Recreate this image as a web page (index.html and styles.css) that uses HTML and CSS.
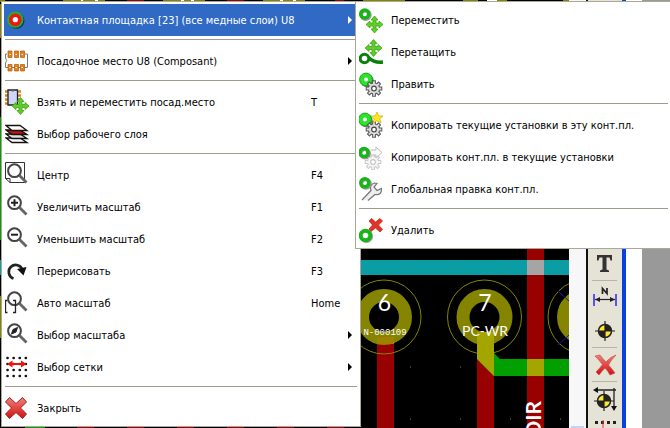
FILE: index.html
```html
<!DOCTYPE html>
<html lang="ru">
<head>
<meta charset="utf-8">
<title>Pcbnew</title>
<link rel="stylesheet" href="styles.css">
</head>
<body>
<svg class="defs" aria-hidden="true">
  <defs>
    <linearGradient id="red" x1="0" y1="0" x2="0" y2="1"><stop offset="0" stop-color="#f08078"/><stop offset="1" stop-color="#d01010"/></linearGradient>
    <path id="arrows" d="M0-8.500 3.500-4.500H1.500V-1.500H4.500V-3.500L8.500 0 4.500 3.500V1.500H1.500V4.500H3.500L0 8.500-3.500 4.500H-1.500V1.500H-4.500V3.500L-8.500 0-4.500-3.500V-1.500H-1.500V-4.500H-3.500Z" fill="#5fce28" stroke="#3fa514" stroke-width=".8"/>
    <g id="gear">
      <path d="M0-8.300V8.300M-8.300 0H8.300M-5.900-5.900 5.900 5.900M-5.900 5.900 5.900-5.900" stroke="#555" stroke-width="3.800"/>
      <circle r="6.100" fill="#555"/>
      <path d="M0-7.300V7.300M-7.300 0H7.300M-5.200-5.200 5.200 5.200M-5.200 5.200 5.200-5.200" stroke="#ddd" stroke-width="1.800"/>
      <circle r="5.100" fill="#ddd"/>
      <circle r="2.300" fill="#fff" stroke="#444" stroke-width="1.200"/>
    </g>
    <g id="ring">
      <circle cx="1" cy="1" r="4.300" fill="none" stroke="#999" stroke-width="3.400"/>
      <circle r="4" fill="none" stroke="#17b517" stroke-width="3.600"/>
    </g>
    <g id="disc">
      <circle cx="1" cy="1" r="6.700" fill="#777"/>
      <circle r="6.400" fill="#2be32b" stroke="#18a818"/>
      <circle r="2" fill="#fff"/>
    </g>
    <g id="lens" fill="none" stroke="#444">
      <circle cx="9.500" cy="8.700" r="6.400" stroke-width="2"/>
      <path d="M14.500 13.500 21.500 20.500" stroke="#666" stroke-width="2.800"/>
    </g>
    <path id="cross" d="M-10.500-6-6.500-10.500 0-4.500 6.500-10.500 10.500-6 4.500 0 10.500 6 6.500 10.500 0 4.500-6.500 10.500-10.500 6-4.500 0Z" fill="url(#red)" stroke="#a02020"/>
    <g id="target">
      <circle r="6.500" fill="#ffe92a" stroke="#222" stroke-width="1.500"/>
      <path d="M0 0V-6.500A6.500 6.500 0 0 1 6.500 0ZM0 0V6.500A6.500 6.500 0 0 1-6.500 0Z" fill="#222"/>
      <path d="M0-10V10M-10 0H10" stroke="#222" stroke-width="1.200"/>
    </g>
  </defs>
</svg>

<main class="workspace">
  <svg class="board" viewBox="0 0 569 428" preserveAspectRatio="xMaxYMin slice" role="img" aria-label="Печатная плата">
    <rect width="569" height="428" fill="#000"/>
    <path d="M0 0H5V2H0ZM63 0H105V2H63ZM163 0H205V2H163ZM263 0H305V2H263ZM363 0H405V2H363ZM463 0H478V2H463ZM497 0H507V2H497ZM563 0H569V2H563Z" fill="#848400"/>
    <path d="M81 0H83V2H81ZM95 0H98V2H95ZM181 0H184V2H181ZM191 0H194V2H191ZM280 0H283V2H280ZM293 0H296V2H293ZM487 0H497V2H487Z" fill="#fff"/>
    <path d="M127 0H144V2H127ZM227 0H244V2H227ZM335 0H344V2H335ZM77 427H94V428H77ZM127 427H144V428H127ZM177 427H194V428H177ZM227 427H244V428H227ZM277 427H294V428H277ZM327 427H344V428H327Z" fill="#990000"/>
    <path d="M0 4H1V38H0ZM0 296H1V338H0Z" fill="#848400"/>
    <path d="M0 117H1V240H0ZM25 427H45V428H25Z" fill="#00a000"/>
    <rect y="260" width="569" height="15" fill="#0a9ea4"/>
    <g fill="#990000">
      <rect x="377" y="335" width="17" height="93"/>
      <rect x="477" y="345" width="17" height="83"/>
      <rect x="527" y="240" width="17" height="188"/>
    </g>
    <rect x="527" y="260" width="17" height="15" fill="#a5a5a5"/>
    <g fill="none" stroke="#848400">
      <circle cx="384" cy="317" r="21.500" stroke-width="13"/>
      <circle cx="484.500" cy="317" r="21.500" stroke-width="13"/>
      <circle cx="585" cy="317" r="21.500" stroke-width="13"/>
      <circle cx="384" cy="317" r="37"/>
      <circle cx="484.500" cy="317" r="37"/>
      <circle cx="585" cy="317" r="37"/>
    </g>
    <rect x="377" y="337" width="17" height="7" fill="#a08000"/>
    <path d="M488 347 500 359H569V376H494L480 362Z" fill="#00a000"/>
    <path d="M477 332H494V376L477 359Z" fill="#a5a500"/>
    <rect x="527" y="359" width="17" height="17" fill="#a5a500"/>
    <path d="M558 291 569 301M558 345 569 335" stroke="#1515c0"/>
    <path d="M410 267h1m49 0h1m49 0h1m49 0h1M410 367h1m49 0h1m49 0h1m49 0h1M410 419h1m49 0h1m49 0h1m49 0h1" stroke="#777"/>
    <g class="board-text" text-anchor="middle">
      <text class="pin" x="384.500" y="311">6</text>
      <text class="pin" x="485" y="311">7</text>
      <text class="net-small" x="385" y="335">N-000109</text>
      <text class="net" x="485" y="336">PC-WR</text>
      <text class="track" text-anchor="end" transform="translate(541 401) rotate(-90)">DIR</text>
    </g>
  </svg>
  <div class="scroll"><span class="thumb"></span></div>
  <nav class="tools" aria-label="Инструменты">
    <button aria-label="Текст"><svg viewBox="0 0 26 26"><path d="M5 4H20V9.500H18.500L17.500 6.500H14.500V18.500L17 19.500V21H8V19.500L10.500 18.500V6.500H7.500L6.500 9.500H5Z" fill="#333"/></svg></button>
    <hr>
    <button aria-label="Размер"><svg viewBox="0 0 26 26"><path d="M2 9V21M24 9V21" stroke="#33f" stroke-width="1.600"/><path d="M3 14.500H23" stroke="#222" stroke-width="1.200"/><path d="M3 14.500 8 12V17ZM23 14.500 18 12V17Z" fill="#222"/><path d="M10.500 9V3.500L15 8.500V3" fill="none" stroke="#222" stroke-width="1.700"/></svg></button>
    <button aria-label="Мишень"><svg viewBox="0 0 26 26"><use href="#target" x="13" y="13"/></svg></button>
    <hr>
    <button aria-label="Удалить элемент"><svg viewBox="0 0 26 26"><path d="M3 4 8 3Q11 7 14 10 18 5 24 3 19 8 16.500 13 20 17 23 21L18 23Q16 19 13 16 10 19 7 23L4 20Q8 16 10.500 12.500 7 8 3 4Z" fill="url(#red)" stroke="#c44" stroke-width=".6"/></svg></button>
    <hr>
    <button aria-label="Начало координат"><svg viewBox="0 0 26 26"><use href="#target" x="12" y="15"/><path d="M3 4H24M22 2V22" stroke="#222" stroke-width="1.300"/><path d="M1 4 6 1V7ZM22 25 19 20H25Z" fill="#111"/></svg></button>
    <button aria-label="Сетка"><svg viewBox="0 0 26 26"><path d="M3 3.500H25" stroke="#222" stroke-width="3" stroke-dasharray="3 3"/><path d="M11 1V26" stroke="#e33"/></svg></button>
  </nav>
  <div class="edge"></div>
  <div class="gutter"></div>
  <div class="desk"></div>
</main>

<div class="menu menu-main" role="menu">
  <button class="item active" role="menuitem"><svg viewBox="0 0 26 26"><circle cx="11.500" cy="13.800" r="8" fill="#17356c"/><circle cx="10.300" cy="12.700" r="7.200" fill="#f01515" stroke="#20b520" stroke-width="1.800"/><circle cx="10.300" cy="12.700" r="2.600" fill="#fff"/></svg><span class="label">Контактная площадка [23] (все медные слои) U8</span><span class="key"></span><i class="arrow"></i></button>
  <hr>
  <button class="item" role="menuitem"><svg viewBox="0 0 26 26"><path d="M2 6H.5V10Q3 12.500.5 15V19.500H22.500V6H20" fill="none" stroke="#777"/><path d="M3 3h4v6.500h-4zM9.500 3h4v6.500h-4zM15.500 3h4v6.500h-4zM3 16.500h4v6.500h-4zM9.500 16.500h4v6.500h-4zM15.500 16.500h4v6.500h-4z" fill="#e88018" stroke="#b05a08" stroke-width=".7"/><path d="M4.500 6.500h1.500m4.500 0h1.500m4.500 0h1.500M4.500 19.500h1.500m4.500 0h1.500m4.500 0h1.500" stroke="#fff"/></svg><span class="label">Посадочное место U8 (Composant)</span><span class="key"></span><i class="arrow"></i></button>
  <hr>
  <button class="item" role="menuitem"><svg viewBox="0 0 26 26"><path d="M0 2.500H16M0 6.500H16M0 10.500H16M0 14.500H13" stroke="#e08020" stroke-width="2.600"/><path d="M3 1H12.500V16H3Z" fill="#cfd6f8" stroke="#222" stroke-width="1.300"/><path d="M6 1.500Q7.800 4 9.500 1.500" fill="#777"/><use href="#arrows" x="15.500" y="17"/></svg><span class="label">Взять и переместить посад.место</span><kbd class="key">T</kbd></button>
  <button class="item" role="menuitem"><svg viewBox="0 0 26 26"><g stroke="#111" stroke-width="1.300"><path d="M1 17H15L22 21.500H7Z" fill="#fff"/><path d="M1 13H15L22 17.500H7Z" fill="#ddd"/><path d="M1 9H15L22 13.500H7Z" fill="#c01010"/><path d="M1 4.500H15L22 9.500H7Z" fill="#fff"/></g></svg><span class="label">Выбор рабочего слоя</span></button>
  <hr>
  <button class="item" role="menuitem"><svg viewBox="0 0 26 26"><path d="M.5.500H19.500V20.500H5L.5 16.500ZM.5 16.500H5V20.500" fill="#fff" stroke="#333"/><use href="#lens"/></svg><span class="label">Центр</span><kbd class="key">F4</kbd></button>
  <button class="item" role="menuitem"><svg viewBox="0 0 26 26"><use href="#lens"/><path d="M6 8.700H13M9.500 5.200V12.200" stroke="#222" stroke-width="2"/></svg><span class="label">Увеличить масштаб</span><kbd class="key">F1</kbd></button>
  <button class="item" role="menuitem"><svg viewBox="0 0 26 26"><use href="#lens"/><path d="M6 8.700H13" stroke="#222" stroke-width="2"/></svg><span class="label">Уменьшить масштаб</span><kbd class="key">F2</kbd></button>
  <button class="item" role="menuitem"><svg viewBox="0 0 26 26"><path d="M8.500 20.500A7 7 0 1 1 17.500 12" fill="none" stroke="#222" stroke-width="2.600"/><path d="M12 11 21.500 9 18.500 17.500Z" fill="#111"/></svg><span class="label">Перерисовать</span><kbd class="key">F3</kbd></button>
  <button class="item" role="menuitem"><svg viewBox="0 0 26 26"><use href="#lens"/><path d="M2.500 10.500H.5V22.500H2.500M8 10.500H10.500V22.500H8" fill="none" stroke="#222" stroke-width="1.300"/></svg><span class="label">Авто масштаб</span><kbd class="key">Home</kbd></button>
  <button class="item" role="menuitem"><svg viewBox="0 0 26 26"><use href="#lens"/><path d="M12.500 5.500 11 10 6.500 12 8 7.500Z" fill="#222" stroke="#222"/></svg><span class="label">Выбор масштаба</span><span class="key"></span><i class="arrow"></i></button>
  <button class="item" role="menuitem"><svg viewBox="0 0 26 26"><path d="M2.500 4H21.500M2.500 10H21.500M2.500 16H21.500M2.500 22H21.500" stroke="#111" stroke-width="2.600" stroke-linecap="round" stroke-dasharray=".1 6"/><path d="M5 10H19" stroke="#f01010" stroke-width="2"/><path d="M2 10 7.500 6.500V13.500ZM21.500 10 16 6.500V13.500Z" fill="#f01010"/></svg><span class="label">Выбор сетки</span><span class="key"></span><i class="arrow"></i></button>
  <hr>
  <button class="item" role="menuitem"><svg viewBox="0 0 26 26"><use href="#cross" x="11" y="13"/></svg><span class="label">Закрыть</span></button>
</div>

<div class="menu menu-sub" role="menu">
  <button class="item" role="menuitem"><svg viewBox="0 0 26 26"><use href="#ring" x="5.700" y="7"/><use href="#arrows" x="15.500" y="17.500"/></svg><span class="label">Переместить</span></button>
  <button class="item" role="menuitem"><svg viewBox="0 0 26 26"><use href="#arrows" x="14.500" y="9"/><path d="M10 19Q15 24 24 23" fill="none" stroke="#0a800a" stroke-width="3.500"/><circle cx="5.500" cy="19.500" r="4.300" fill="#fff" stroke="#0a800a" stroke-width="3"/></svg><span class="label">Перетащить</span></button>
  <button class="item" role="menuitem"><svg viewBox="0 0 26 26"><use href="#disc" x="7" y="8.500"/><use href="#gear" x="15" y="17.500"/></svg><span class="label">Править</span></button>
  <hr>
  <button class="item" role="menuitem"><svg viewBox="0 0 26 26"><use href="#disc" x="6" y="7.500"/><use href="#gear" x="15" y="17.500"/><path d="M18 0 19.700 3.800 24 4 20.800 6.800 22 11 18 8.700 14 11 15.200 6.800 12 4 16.300 3.800Z" fill="#ffe820" stroke="#c8b010" stroke-width=".7"/></svg><span class="label">Копировать текущие установки в эту конт.пл.</span></button>
  <button class="item" role="menuitem"><svg viewBox="0 0 26 26"><use href="#ring" x="5" y="8.500"/><use class="faint" href="#gear" x="14" y="18"/><path d="M12 6H17V3L23 8.500 17 14V11H13" fill="#fafafa" stroke="#bbb"/></svg><span class="label">Копировать конт.пл. в текущие установки</span></button>
  <button class="item" role="menuitem"><svg viewBox="0 0 26 26"><path d="M3 24 12 14.500Q10 9 15.500 7L18 7.500 15 11 18 14.500 22.500 12.500Q23 19.500 16 18.500L9 24.500" fill="#eee" stroke="#777" stroke-width="1.200"/><use href="#ring" x="5.800" y="6.800"/></svg><span class="label">Глобальная правка конт.пл.</span></button>
  <hr>
  <button class="item" role="menuitem"><svg viewBox="0 0 26 26"><path d="M10 4 12.500 1.500 16.500 5 21 1.500 23.500 4 19.500 8 23.500 12.500 21 15 16.500 11 12 14.500 10 12 13.500 8Z" fill="#e03428" stroke="#b02018" stroke-width=".7"/><circle cx="7.500" cy="19.500" r="5" fill="none" stroke="#999" stroke-width="3"/><circle cx="6.500" cy="18.500" r="4.800" fill="#fff" stroke="#17b517" stroke-width="4"/></svg><span class="label">Удалить</span></button>
</div>
</body>
</html>
```
FILE: styles.css
```css
* { box-sizing: border-box; }

body {
  margin: 0;
  position: relative;
  min-height: 100vh;
  overflow: hidden;
  font-family: "DejaVu Sans Condensed", "DejaVu Sans", sans-serif;
  font-size: 11px;
  color: #000;
}

.defs { position: absolute; width: 0; height: 0; }

.workspace { display: flex; height: 100vh; }

.board { flex: 1; min-width: 0; height: 100%; display: block; }
.board-text { fill: #fff; font-family: Lato, sans-serif; }
.pin { font-size: 23px; }
.net-small { font-family: "Liberation Mono", monospace; font-size: 9px; }
.net { font-size: 14px; }
.track { font-size: 21px; font-weight: 700; }

.scroll {
  width: 17px;
  background: #f7f7f7;
  display: flex;
  align-items: flex-end;
  justify-content: center;
}
.thumb { width: 13px; height: 2px; background: #c4d4f8; }

.tools {
  width: 36px;
  padding: 247px 4px 0 3px;
  overflow: hidden;
  background: #e5e2d6;
  border-left: 2px solid #111;
  display: flex;
  flex-direction: column;
  align-items: center;
}
.tools button {
  flex: none;
  display: flex;
  align-items: center;
  justify-content: center;
  width: 28px;
  height: 33px;
  padding: 0;
  border: 0;
  background: none;
}
.tools svg { width: 26px; height: 26px; }
.tools hr {
  flex: none;
  width: 25px;
  height: 1px;
  margin: 0;
  border: 0;
  background: #b8b4a4;
}

.edge { width: 4px; background: #0a40e0; }
.gutter { width: 16px; background: #fff; }
.desk { width: 28px; background: #999; }

.menu {
  position: absolute;
  top: 1px;
  padding: 2px;
  background: #fff;
  border: 1px solid #aca899;
}
.menu-main { left: 1px; width: 360px; }
.menu-sub { left: 355px; right: -2px; }

.menu hr {
  height: 1px;
  margin: 3px 1px 5px;
  border: 0;
  background: #9f9c8c;
}

.item {
  display: grid;
  grid-template-columns: 32px 1fr 37px 10px;
  align-items: center;
  width: 100%;
  height: 32px;
  padding: 0 0 0 1px;
  border: 0;
  background: none;
  color: inherit;
  font: inherit;
  text-align: left;
}
.item svg { width: 26px; height: 26px; }
.menu-sub .item { grid-template-columns: 32px 1fr; }
.active { background: #316ac5; color: #fff; }
.label { white-space: nowrap; }
.key { font: inherit; }
.faint { opacity: .3; }

.arrow {
  width: 0;
  border: 4px solid transparent;
  border-left-color: currentColor;
  border-right: 0;
}
```
